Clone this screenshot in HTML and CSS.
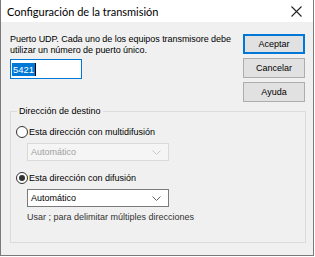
FILE: index.html
```html
<!DOCTYPE html>
<html lang="es">
<head>
<meta charset="utf-8">
<link rel="stylesheet" href="styles.css">
</head>
<body>
<div class="window">
  <div class="titlebar">
    <span class="title">Configuración de la transmisión</span>
    <svg class="close" width="11" height="11" viewBox="0 0 11 11"><path d="M0.5 0.5 L10.5 10.5 M10.5 0.5 L0.5 10.5" stroke="#222" stroke-width="1.1" fill="none"/></svg>
  </div>
  <div class="body">
    <div class="top">
      <div class="left">
        <p class="desc">Puerto UDP. Cada uno de los equipos transmisore debe utilizar un número de puerto único.</p>
        <div class="input"><span class="sel">5421</span><span class="caret"></span></div>
      </div>
      <div class="buttons">
        <div class="btn default">Aceptar</div>
        <div class="btn">Cancelar</div>
        <div class="btn">Ayuda</div>
      </div>
    </div>
    <div class="group">
      <div class="legend">Dirección de destino</div>
      <div class="radio-row">
        <span class="radio"></span><span class="label">Esta dirección con multidifusión</span>
      </div>
      <div class="select disabled"><span>Automático</span>
        <svg class="chev" width="9" height="5" viewBox="0 0 9 5"><path d="M0.5 0.5 L4.5 4.5 L8.5 0.5" stroke="#c8c8c8" fill="none"/></svg>
      </div>
      <div class="radio-row second">
        <span class="radio checked"></span><span class="label">Esta dirección con difusión</span>
      </div>
      <div class="select"><span>Automático</span>
        <svg class="chev" width="9" height="5" viewBox="0 0 9 5"><path d="M0.5 0.5 L4.5 4.5 L8.5 0.5" stroke="#606060" fill="none"/></svg>
      </div>
      <div class="hint">Usar ; para delimitar múltiples direcciones</div>
    </div>
  </div>
</div>
</body>
</html>
```

FILE: styles.css
```css
html, body { margin: 0; padding: 0; background: #ffffff; }
body { font-family: "Liberation Sans", Arial, sans-serif; font-size: 9px; color: #000; }

.window {
  width: 314px;
  height: 256px;
  box-sizing: border-box;
  border: 1px solid #7a7a7a;
  border-top: none;
  background: #f0f0f0;
  display: flex;
  flex-direction: column;
}

.titlebar {
  height: 22px;
  background: #ffffff;
  display: flex;
  align-items: center;
  justify-content: space-between;
  padding: 0 11px 0 6px;
  flex: none;
}
.title {
  font-family: "Lato", sans-serif;
  font-size: 11px;
  color: #000;
}
.close { display: block; }

.body {
  padding: 12px 8px 0 9px;
}

.top {
  display: flex;
  justify-content: space-between;
}
.left { width: 231px; }
.desc {
  margin: 0;
  line-height: 11px;
  letter-spacing: -0.05px;
  color: #000;
}
.input {
  margin-top: 3px;
  width: 72px;
  height: 20px;
  box-sizing: border-box;
  border: 1px solid #0078d7;
  background: #fff;
  display: flex;
  align-items: center;
  padding-left: 1px;
}
.sel {
  background: #0078d7;
  color: #fff;
  font-size: 9.5px;
  line-height: 13px;
  padding: 0 1px;
}
.caret { width: 1px; height: 13px; background: #000; }

.buttons {
  display: flex;
  flex-direction: column;
  gap: 4px;
}
.btn {
  width: 62px;
  height: 20px;
  box-sizing: border-box;
  border: 1px solid #adadad;
  background: #e1e1e1;
  display: flex;
  align-items: center;
  justify-content: center;
}
.btn.default { border: 1px solid #0078d7; box-shadow: inset 0 0 0 1px #0078d7; }

.group {
  margin-top: 9px;
  width: 296px;
  height: 132px;
  box-sizing: border-box;
  border: 1px solid #dcdcdc;
  position: relative;
  padding: 0 0 0 5px;
}
.legend {
  position: absolute;
  top: -6px;
  left: 6px;
  padding: 0 2px;
  background: #f0f0f0;
  line-height: 11px;
}
.radio-row {
  display: flex;
  align-items: center;
  margin-top: 13px;
  height: 13px;
}
.radio-row.second { margin-top: 10px; }
.radio {
  width: 12px;
  height: 12px;
  box-sizing: border-box;
  border: 1px solid #333;
  border-radius: 50%;
  background: #fff;
  margin-right: 1px;
  position: relative;
}
.radio.checked::after {
  content: "";
  position: absolute;
  left: 2px; top: 2px;
  width: 6px; height: 6px;
  border-radius: 50%;
  background: #333;
}
.select {
  margin: 5px 0 0 11px;
  width: 142px;
  height: 18px;
  box-sizing: border-box;
  border: 1px solid #7a7a7a;
  background: #fff;
  display: flex;
  align-items: center;
  justify-content: space-between;
  padding: 0 7px 0 3px;
}
.select.disabled {
  border-color: #d9d9d9;
  background: #f5f5f5;
  color: #a0a0a0;
}
.chev { display: block; }
.hint {
  margin: 5px 0 0 11px;
  color: #333;
  line-height: 11px;
}
```
